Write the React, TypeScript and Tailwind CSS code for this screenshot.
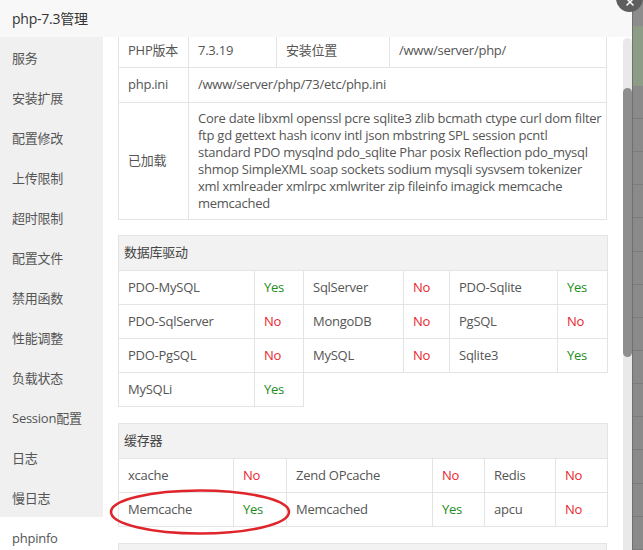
import React from 'react';
import { X } from 'lucide-react';

const menu = [
  '服务',
  '安装扩展',
  '配置修改',
  '上传限制',
  '超时限制',
  '配置文件',
  '禁用函数',
  '性能调整',
  '负载状态',
  'Session配置',
  '日志',
  '慢日志',
  'phpinfo'
];

const loaded = [
  'Core date libxml openssl pcre sqlite3 zlib bcmath ctype curl dom filter',
  'ftp gd gettext hash iconv intl json mbstring SPL session pcntl',
  'standard PDO mysqlnd pdo_sqlite Phar posix Reflection pdo_mysql',
  'shmop SimpleXML soap sockets sodium mysqli sysvsem tokenizer',
  'xml xmlreader xmlrpc xmlwriter zip fileinfo imagick memcache',
  'memcached'
];

type Item = [string, boolean];

const dbRows: Item[][] = [
  [['PDO-MySQL', true], ['SqlServer', false], ['PDO-Sqlite', true]],
  [['PDO-SqlServer', false], ['MongoDB', false], ['PgSQL', false]],
  [['PDO-PgSQL', false], ['MySQL', false], ['Sqlite3', true]],
  [['MySQLi', true]]
];

const cacheRows: Item[][] = [
  [['xcache', false], ['Zend OPcache', false], ['Redis', false]],
  [['Memcache', true], ['Memcached', true], ['apcu', false]]
];

const base = 'border border-[#e4e4e4] px-[9px] text-[13px] whitespace-nowrap';
const cell = `${base} text-[#555]`;

function Flag({ on }: { on: boolean }) {
  return (
    <td className={`${base} ${on ? 'text-[#1c8c1c]' : 'text-[#e8262e]'}`}>
      {on ? 'Yes' : 'No'}
    </td>
  );
}

function Section({
  title,
  cols,
  rows,
  first = false
}: {
  title: string;
  cols: string[];
  rows: Item[][];
  first?: boolean;
}) {
  return (
    <table className={`${first ? 'mt-[15px]' : 'mt-[16px]'} w-full table-fixed border-collapse`}>
      <colgroup>
        {cols.map((c, i) => (
          <col key={i} className={c} />
        ))}
      </colgroup>
      <thead>
        <tr className="h-[35px]">
          <th
            colSpan={6}
            className="border border-[#e4e4e4] bg-[#f2f2f2] pl-[5px] text-left text-[13px] font-normal text-[#444]"
          >
            {title}
          </th>
        </tr>
      </thead>
      <tbody>
        {rows.map((row, r) => (
          <tr key={r} className="h-[34px]">
            {row.map(([name, on]) => (
              <React.Fragment key={name}>
                <td className={cell}>{name}</td>
                <Flag on={on} />
              </React.Fragment>
            ))}
          </tr>
        ))}
      </tbody>
    </table>
  );
}

export default function App() {
  return (
    <div className="relative flex h-[550px] w-[643px] overflow-hidden bg-[#8a8a8a] font-['Open_Sans','Noto_Sans_CJK_SC',sans-serif] tracking-[-0.25px]">
      <div className="flex h-full w-[632px] flex-col bg-white">
        <div className="flex h-[37px] shrink-0 items-center bg-[#f8f8f8] pb-[1px] pl-[12px] text-[14px] text-[#333]">
          php-7.3管理
        </div>
        <div className="flex min-h-0 flex-1">
          <div className="w-[103px] shrink-0 bg-[#f0f0f0]">
            {menu.map((m) => (
              <div
                key={m}
                className={`h-[40px] pl-[12px] pt-[1px] text-[13px] leading-[40px] text-[#555] ${
                  m === 'phpinfo' ? 'bg-white' : ''
                }`}
              >
                {m}
              </div>
            ))}
          </div>
          <div className="min-w-0 flex-1 overflow-hidden pl-[15px] pr-[16px]">
            <table className="-mt-[3px] w-full table-fixed border-collapse">
              <colgroup>
                <col className="w-[70px]" />
                <col className="w-[88px]" />
                <col className="w-[113px]" />
                <col />
              </colgroup>
              <tbody>
                <tr className="h-[33px]">
                  <td className={cell}>PHP版本</td>
                  <td className={cell}>7.3.19</td>
                  <td className={cell}>安装位置</td>
                  <td className={cell}>/www/server/php/</td>
                </tr>
                <tr className="h-[35px]">
                  <td className={cell}>php.ini</td>
                  <td className={cell} colSpan={3}>
                    /www/server/php/73/etc/php.ini
                  </td>
                </tr>
                <tr>
                  <td className={cell}>已加载</td>
                  <td className={`${cell} py-[7px] leading-[17px]`} colSpan={3}>
                    {loaded.map((l) => (
                      <div key={l}>{l}</div>
                    ))}
                  </td>
                </tr>
              </tbody>
            </table>

            <Section
              first
              title="数据库驱动"
              cols={['w-[136px]', 'w-[49px]', 'w-[100px]', 'w-[46px]', 'w-[108px]', 'w-[50px]']}
              rows={dbRows}
            />
            <Section
              title="缓存器"
              cols={['w-[115px]', 'w-[53px]', 'w-[146px]', 'w-[52px]', 'w-[71px]', 'w-[52px]']}
              rows={cacheRows}
            />
            {/* next section, only its header strip is in view */}
            <div className="mt-[16px] h-[35px] border border-[#e4e4e4] bg-[#f2f2f2]" />
          </div>
          <div className="w-[9px] shrink-0 pt-[1px]">
            <div className="flex h-full flex-col rounded-t-full bg-[#e9e9e9]">
              <div className="mt-[50px] h-[269px] rounded-full bg-[#8e8e8e]" />
            </div>
          </div>
        </div>
      </div>

      <div className="flex flex-1 flex-col border-l border-[#707070]">
        <div className="h-[27px] bg-[#8c8c8c]" />
        <div className="h-[61px] bg-[#8d9c86]" />
        {Array.from({ length: 14 }).map((_, i) => (
          <div key={i} className="h-[34px] border-b border-[#7c7c7c] bg-[#8a8a8a]" />
        ))}
      </div>

      <div className="absolute left-[616px] top-[-15px] flex h-[27px] w-[27px] items-end justify-center rounded-full bg-[#5e5e5e] pb-[4px] text-white">
        <X size={12} strokeWidth={3} />
      </div>

      <svg
        className="absolute left-[106px] top-[486px]"
        width="190"
        height="52"
        viewBox="0 0 190 52"
      >
        <ellipse cx="94" cy="26" rx="89" ry="21.5" fill="none" stroke="#e0242b" strokeWidth="2.6" />
      </svg>
    </div>
  );
}
